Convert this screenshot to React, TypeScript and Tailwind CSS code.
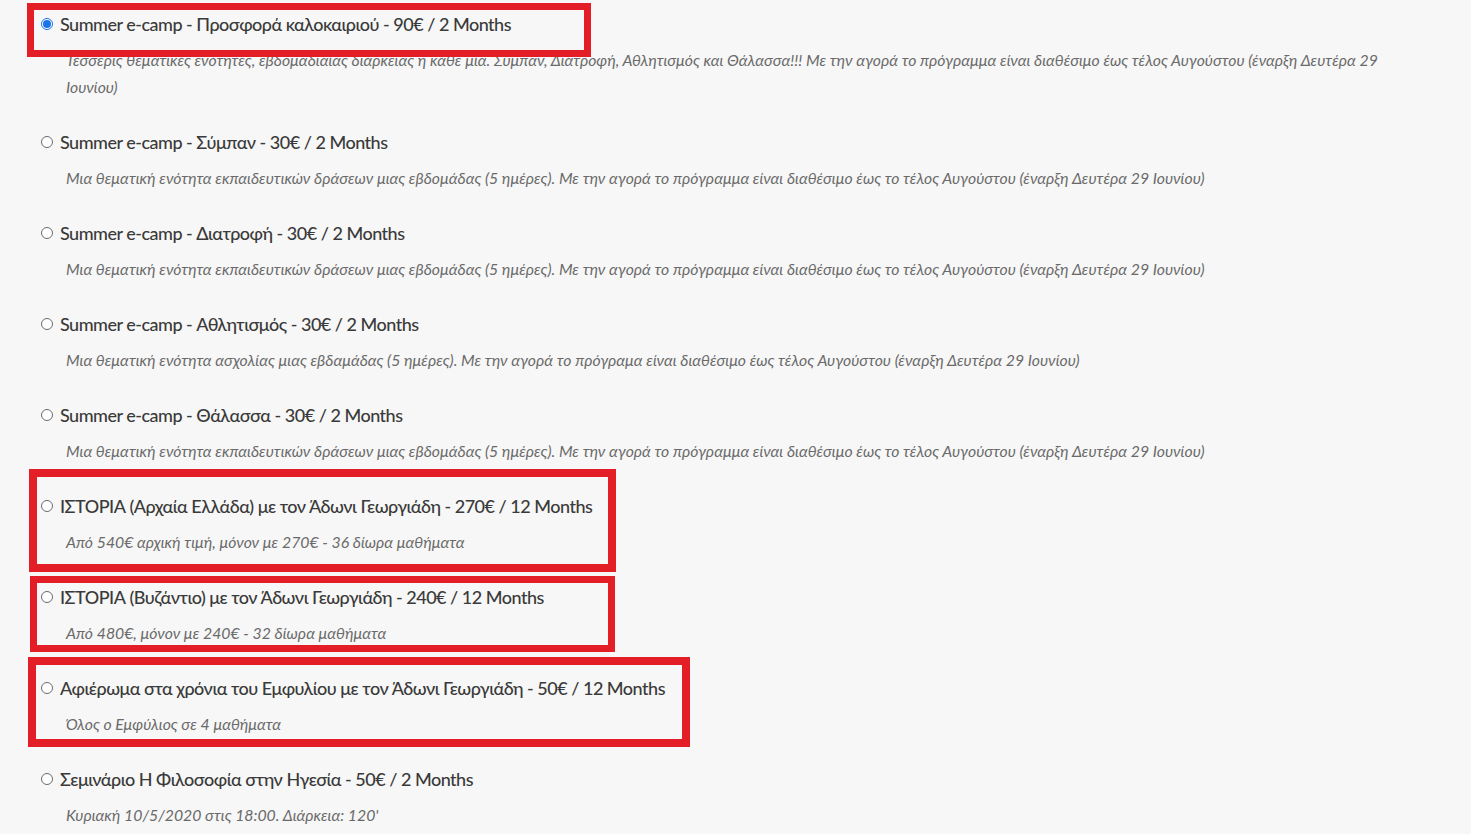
import React from "react";

const items = [
  {
    title: "Summer e-camp - Προσφορά καλοκαιριού - 90€ / 2 Months",
    desc: "Τέσσερις θεματικές ενότητες, εβδομαδιαίας διάρκειας η κάθε μία. Σύμπαν, Διατροφή, Αθλητισμός και Θάλασσα!!! Με την αγορά το πρόγραμμα είναι διαθέσιμο έως τέλος Αυγούστου (έναρξη Δευτέρα 29 Ιουνίου)",
    checked: true,
  },
  {
    title: "Summer e-camp - Σύμπαν - 30€ / 2 Months",
    desc: "Μια θεματική ενότητα εκπαιδευτικών δράσεων μιας εβδομάδας (5 ημέρες). Με την αγορά το πρόγραμμα είναι διαθέσιμο έως το τέλος Αυγούστου (έναρξη Δευτέρα 29 Ιουνίου)",
  },
  {
    title: "Summer e-camp - Διατροφή - 30€ / 2 Months",
    desc: "Μια θεματική ενότητα εκπαιδευτικών δράσεων μιας εβδομάδας (5 ημέρες). Με την αγορά το πρόγραμμα είναι διαθέσιμο έως το τέλος Αυγούστου (έναρξη Δευτέρα 29 Ιουνίου)",
  },
  {
    title: "Summer e-camp - Αθλητισμός - 30€ / 2 Months",
    desc: "Μια θεματική ενότητα ασχολίας μιας εβδαμάδας (5 ημέρες). Με την αγορά το πρόγραμα είναι διαθέσιμο έως τέλος Αυγούστου (έναρξη Δευτέρα 29 Ιουνίου)",
  },
  {
    title: "Summer e-camp - Θάλασσα - 30€ / 2 Months",
    desc: "Μια θεματική ενότητα εκπαιδευτικών δράσεων μιας εβδομάδας (5 ημέρες). Με την αγορά το πρόγραμμα είναι διαθέσιμο έως το τέλος Αυγούστου (έναρξη Δευτέρα 29 Ιουνίου)",
  },
  {
    title: "ΙΣΤΟΡΙΑ (Αρχαία Ελλάδα) με τον Άδωνι Γεωργιάδη - 270€ / 12 Months",
    desc: "Από 540€ αρχική τιμή, μόνον με 270€ - 36 δίωρα μαθήματα",
  },
  {
    title: "ΙΣΤΟΡΙΑ (Βυζάντιο) με τον Άδωνι Γεωργιάδη - 240€ / 12 Months",
    desc: "Από 480€, μόνον με 240€ - 32 δίωρα μαθήματα",
  },
  {
    title: "Αφιέρωμα στα χρόνια του Εμφυλίου με τον Άδωνι Γεωργιάδη - 50€ / 12 Months",
    desc: "Όλος ο Εμφύλιος σε 4 μαθήματα",
  },
  {
    title: "Σεμινάριο Η Φιλοσοφία στην Ηγεσία - 50€ / 2 Months",
    desc: "Κυριακή 10/5/2020 στις 18:00. Διάρκεια: 120'",
  },
];

function Radio({ checked }: { checked?: boolean }) {
  if (checked) {
    return (
      <span className="flex h-[12px] w-[12px] shrink-0 items-center justify-center rounded-full border border-[#1a73e8] bg-white">
        <span className="h-[8px] w-[8px] rounded-full bg-[#1a73e8]" />
      </span>
    );
  }
  return <span className="h-[12px] w-[12px] shrink-0 rounded-full border border-[#6b6b6b] bg-white" />;
}

export default function App() {
  return (
    <div
      className="relative min-h-screen overflow-hidden bg-[#f7f7f7] pl-[41px] pt-[13px]"
      style={{ fontFamily: "Lato, 'Noto Sans', sans-serif" }}
    >
      <div className="flex flex-col gap-[31px]">
        {items.map((it, i) => (
          <div key={i} className="flex flex-col">
            <label className="flex h-[22px] items-center gap-[7px] text-[18px] font-medium leading-[22px] text-[#3a3a3a]">
              <Radio checked={it.checked} />
              <span className="tracking-[-0.5px]">{it.title}</span>
            </label>
            <p className="mt-[11px] w-[1365px] pl-[25px] text-[15.8px] italic leading-[27px] text-[#6a6a6a]">
              {it.desc}
            </p>
          </div>
        ))}
      </div>

      <div className="absolute left-[27px] top-[3px] h-[54px] w-[564px] border-[7px] border-[#e41e26]" />
      <div className="absolute left-[29px] top-[469px] h-[103px] w-[587px] border-[8px] border-[#e41e26]" />
      <div className="absolute left-[30px] top-[576px] h-[76px] w-[585px] border-[7px] border-[#e41e26]" />
      <div className="absolute left-[28px] top-[657px] h-[90px] w-[662px] border-[8px] border-[#e41e26]" />
    </div>
  );
}
